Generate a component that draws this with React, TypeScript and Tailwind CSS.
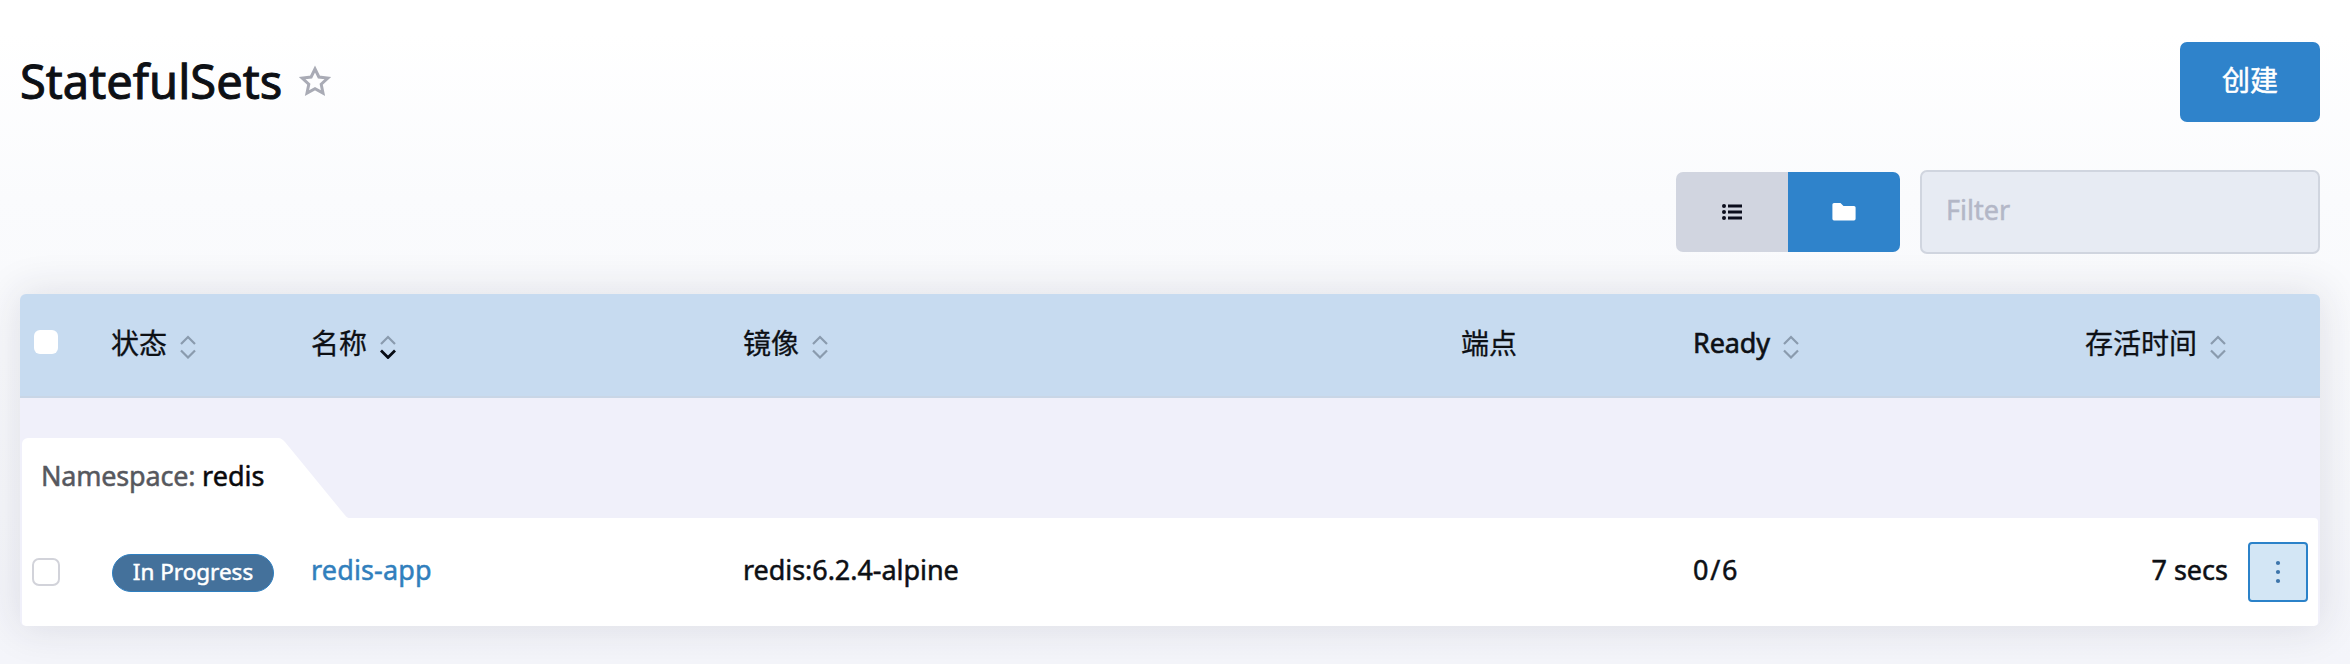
import React from "react";

const grid =
  "grid grid-cols-[91px_200px_432px_718px_232px_306px_321px] items-center text-[27px] leading-[36px]";

function SortIcon({ active = false }: { active?: boolean }) {
  return (
    <svg width="18" height="24" viewBox="0 0 18 24" fill="none" className="relative top-[4px] ml-3 shrink-0">
      <path d="M2 9 L9 2 L16 9" stroke="#8a9bae" strokeWidth="2.2" />
      <path
        d="M2 15.5 L9 22.5 L16 15.5"
        stroke={active ? "#070b14" : "#8a9bae"}
        strokeWidth={active ? 2.8 : 2.2}
      />
    </svg>
  );
}

function Heading({ label, sortable = true, active = false }: { label: string; sortable?: boolean; active?: boolean }) {
  return (
    <div className="flex items-center">
      <span className={label === "Ready" ? "tracking-[-0.1px] [-webkit-text-stroke:0.6px]" : "text-[28px] [-webkit-text-stroke:0.3px]"}>
        {label}
      </span>
      {sortable && <SortIcon active={active} />}
    </div>
  );
}

export default function App() {
  return (
    <main className="h-[664px] w-[2350px] overflow-hidden bg-linear-to-b from-white from-5% via-[#fafbfd] via-30% to-[#f4f5fa] px-[20px] pr-[30px] pt-[42px] font-['Noto_Sans','Noto_Sans_CJK_SC',sans-serif] text-[#0d1015] [-webkit-text-stroke:0.5px]">
      <header className="flex h-[80px] items-center justify-between">
        <div className="flex items-center pb-[3px]">
          <h1 className="text-[47px] leading-[64px] tracking-[0.05px] [-webkit-text-stroke:1px]">StatefulSets</h1>
          <svg width="34" height="34" viewBox="0 0 34 34" fill="none" className="ml-[16px]">
            <path
              d="M17 5 L20.9 13 L29.8 14.1 L23.2 20.2 L25 29 L17 24.6 L9 29 L10.8 20.2 L4.2 14.1 L13.1 13 Z"
              stroke="#a9abb5"
              strokeWidth="3"
            />
          </svg>
        </div>
        <button className="h-[80px] w-[140px] rounded-[7px] bg-[#2f83cb] pb-1 text-[28px] text-white">创建</button>
      </header>

      <div className="mt-[48px] flex h-[84px] items-center justify-end gap-[20px]">
        <div className="flex h-[80px] w-[224px] overflow-hidden rounded-[7px]">
          <button className="flex flex-1 items-center justify-center bg-[#d1d5e0]">
            <svg width="22" height="18" viewBox="0 0 22 18" fill="#0b0d1c">
              <circle cx="3" cy="3" r="2" />
              <circle cx="3" cy="9" r="2" />
              <circle cx="3" cy="15" r="2" />
              <path d="M7 1.5h14v3H7zM7 7.5h14v3H7zM7 13.5h14v3H7z" />
            </svg>
          </button>
          <button className="flex flex-1 items-center justify-center bg-[#2f83cb]">
            <svg width="24" height="18" viewBox="0 0 24 18" fill="white">
              <path d="M2 0h6.5l3 3H22a1.6 1.6 0 0 1 1.6 1.6v11.2A1.6 1.6 0 0 1 22 17.4H2A1.6 1.6 0 0 1 .4 15.8V1.6A1.6 1.6 0 0 1 2 0z" />
            </svg>
          </button>
        </div>
        <input
          placeholder="Filter"
          className="h-[84px] w-[400px] rounded-[7px] border-2 border-[#d0d5df] bg-[#e7ebf3] px-[24px] pb-[5px] text-[27px] placeholder:text-[#b3b7c7] placeholder:opacity-100"
        />
      </div>

      <section className="mt-[40px] h-[332px] w-[2300px] overflow-hidden rounded-[6px] bg-[#f0f0fa] shadow-[0_0_40px_4px_rgba(35,40,60,0.11)]">
        <div className={`${grid} h-[104px] border-b-2 border-[#c9d6e6] bg-[#c7dbf0] pb-[4px]`}>
          <span className="mb-[2px] ml-[14px] h-[24px] w-[24px] rounded-[6px] bg-white" />
          <Heading label="状态" />
          <Heading label="名称" active />
          <Heading label="镜像" />
          <Heading label="端点" sortable={false} />
          <Heading label="Ready" />
          <div className="flex justify-end pr-[93px]">
            <Heading label="存活时间" />
          </div>
        </div>

        <div className="flex h-[120px] items-end pl-[2px]">
          <div className="flex h-[80px]">
            <div className="w-[256px] whitespace-nowrap rounded-tl-[6px] bg-white pl-[19px] pt-[20px] text-[27px] leading-[36px]">
              <span className="tracking-[-0.2px] text-[#56585e]">Namespace: </span>
              <span className="text-[#0a0a0c]">redis</span>
            </div>
            <svg width="71" height="80" viewBox="0 0 71 80" fill="white">
              <path d="M0 0 C3 0 5 2 7 4 L66 76 Q69 80 71 80 H0Z" />
            </svg>
          </div>
        </div>

        <div className="mx-[2px] h-[108px] rounded-b-[4px] rounded-tr-[4px] bg-white">
          <div className={`${grid} -mx-[2px] h-[108px] pb-[3px]`}>
            <span className="ml-[12px] mt-[3px] h-[28px] w-[28px] rounded-[7px] border-2 border-[#d2d3da] bg-white" />
            <span className="ml-[1px] mt-[4px] flex h-[38px] w-[162px] items-center justify-center rounded-full border border-[#2f7fc0] bg-[#44719b] pb-[2px] text-[22.5px] text-white">
              In Progress
            </span>
            <a className="mt-[-1px] tracking-[0.15px] text-[#317fbd]">redis-app</a>
            <span className="mt-[-1px] tracking-[-0.05px]">redis:6.2.4-alpine</span>
            <span />
            <span className="mt-[-1px] tracking-[1.7px]">0/6</span>
            <div className="flex items-center justify-end pr-[12px]">
              <span className="mt-[-1px]">7 secs</span>
              <button className="ml-[20px] mt-[3px] flex h-[60px] w-[60px] items-center justify-center rounded-[4px] border-2 border-[#2b82c9] bg-[#d3e6f5]">
                <svg width="6" height="24" viewBox="0 0 6 24" fill="#3d75aa">
                  <circle cx="3" cy="3" r="2.1" />
                  <circle cx="3" cy="12" r="2.1" />
                  <circle cx="3" cy="21" r="2.1" />
                </svg>
              </button>
            </div>
          </div>
        </div>
      </section>
    </main>
  );
}
